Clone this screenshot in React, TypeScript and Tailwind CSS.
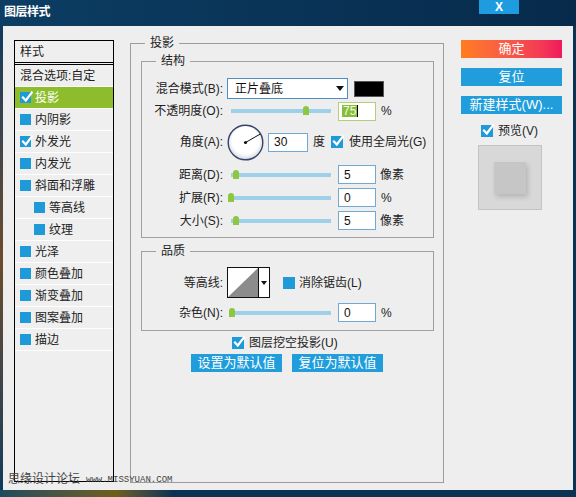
import React from "react";

const Check = ({ checked, cls }: { checked: boolean; cls: string }) => (
  <span className={`relative inline-block shrink-0 bg-[#1e9ad8] ${cls}`}>
    {checked && (
      <svg className="absolute left-[1px] top-[-2px]" width="12" height="13" viewBox="0 0 12 13">
        <path d="M2 7.5 L4.8 10.5 L10.8 2.5" stroke="#fff" strokeWidth="2.2" fill="none" strokeLinecap="square" />
      </svg>
    )}
  </span>
);

const Slider = ({ left }: { left: number }) => (
  <div className="relative w-[100px] h-[10px] flex items-center ml-[8px]">
    <div className="w-full h-[4px] bg-[#9fd0ea]" />
    <div className="absolute top-[0px] w-[6px] h-[9px] bg-[#8dc63f] rounded-t-[3px]" style={{ left }} />
  </div>
);

const Field = ({ v }: { v: string }) => (
  <div className="w-[38px] h-[19px] bg-white border border-[#72a9d3] pl-[5px] flex items-center text-[12px] text-[#111]">
    {v}
  </div>
);

const Label = ({ t }: { t: string }) => (
  <div className="w-[81px] text-right text-[12px] text-[#222] shrink-0">{t}</div>
);

const ListRow = ({
  t,
  checked,
  active,
  indent,
}: {
  t: string;
  checked: boolean;
  active?: boolean;
  indent?: boolean;
}) => (
  <div
    className={`h-[22px] border-b border-white flex items-center text-[12px] ${
      active ? "bg-[#8dbd2c] text-white" : "text-[#222]"
    } ${indent ? "pl-[19px]" : "pl-[5px]"}`}
  >
    <Check checked={checked} cls="w-[11px] h-[11px]" />
    <span className="ml-[4px]">{t}</span>
  </div>
);

export default function App() {
  return (
    <div className="relative w-[576px] h-[497px] overflow-hidden bg-[#0a3457] font-['Liberation_Sans','Noto_Sans_CJK_SC',sans-serif] leading-[14px]">
      {/* title bar */}
      <div className="h-[26px] flex items-start justify-between bg-gradient-to-r from-[#0c3d63] to-[#072a4b]">
        <div className="pl-[4px] pt-[5px] text-[12px] font-bold text-white tracking-[-0.5px]">图层样式</div>
        <div className="mr-[57px] w-[40px] h-[14px] bg-[#1f9be0] text-white text-[12px] font-bold flex items-center justify-center">
          X
        </div>
      </div>

      {/* body row */}
      <div className="flex h-[464px]">
        <div className="w-[3px] bg-gradient-to-b from-[#0c3a5e] via-[#6b4b2a] to-[#0d3a5a]" />
        <div className="w-[570px] h-[464px] bg-[#eeeeee] flex items-start">
          {/* left list */}
          <div className="mt-[14px] ml-[11px] w-[100px] h-[442px] border border-black flex flex-col bg-[#efefef]">
            <div className="h-[21px] pl-[5px] flex items-center text-[12px] text-[#222]">样式</div>
            <div className="h-[3px] border-y border-black" />
            <div className="h-[22px] pl-[5px] flex items-center text-[12px] text-[#222] border-b border-white">
              混合选项:自定
            </div>
            <ListRow t="投影" checked active />
            <ListRow t="内阴影" checked={false} />
            <ListRow t="外发光" checked />
            <ListRow t="内发光" checked={false} />
            <ListRow t="斜面和浮雕" checked={false} />
            <ListRow t="等高线" checked={false} indent />
            <ListRow t="纹理" checked={false} indent />
            <ListRow t="光泽" checked={false} />
            <ListRow t="颜色叠加" checked={false} />
            <ListRow t="渐变叠加" checked={false} />
            <ListRow t="图案叠加" checked={false} />
            <ListRow t="描边" checked={false} />
          </div>

          {/* main group */}
          <fieldset className="mt-[10px] ml-[16px] w-[314px] h-[447px] border border-[#9d9d9d] min-w-0">
            <legend className="ml-[14px] px-[5px] text-[12px] leading-[14px] text-[#222]">投影</legend>

            <fieldset className="mt-[4px] ml-[10px] w-[293px] border border-[#a0a0a0] pt-[10px] pb-[7px] min-w-0">
              <legend className="ml-[14px] px-[5px] text-[12px] leading-[14px] text-[#222]">结构</legend>

              <div className="flex items-center h-[21px]">
                <Label t="混合模式(B):" />
                <div className="ml-[4px] w-[121px] h-[21px] bg-white border border-[#4b8fc4] flex items-center justify-between pl-[7px] pr-[3px] text-[12px] text-[#111]">
                  <span>正片叠底</span>
                  <svg width="8" height="5" viewBox="0 0 8 5">
                    <path d="M0 0 H8 L4 5 Z" fill="#111" />
                  </svg>
                </div>
                <div className="ml-[6px] w-[30px] h-[16px] bg-black border border-[#555]" />
              </div>

              <div className="flex items-center h-[20px] mt-[2px]">
                <Label t="不透明度(O):" />
                <Slider left={72} />
                <div className="ml-[7px] w-[38px] h-[19px] bg-white border border-[#b3cf78] pl-[3px] flex items-center text-[12px]">
                  <span className="bg-[#86bd3a] text-[#f4ffe0] px-[1px] leading-[12px]">75</span>
                  <span className="w-[1px] h-[12px] bg-black" />
                </div>
                <span className="ml-[5px] text-[12px] text-[#222]">%</span>
              </div>

              <div className="flex items-center h-[38px] mt-[2px]">
                <Label t="角度(A):" />
                <svg className="ml-[4px]" width="37" height="37" viewBox="0 0 37 37">
                  <defs>
                    <radialGradient id="dial" cx="50%" cy="45%" r="55%">
                      <stop offset="70%" stopColor="#ffffff" />
                      <stop offset="100%" stopColor="#d4d6dc" />
                    </radialGradient>
                  </defs>
                  <circle cx="18.5" cy="18.5" r="17.3" fill="url(#dial)" stroke="#34446a" strokeWidth="1.4" />
                  <line x1="18.5" y1="18.5" x2="33" y2="10.2" stroke="#111" strokeWidth="1" />
                  <circle cx="18.5" cy="18.5" r="1.6" fill="#111" />
                </svg>
                <div className="ml-[4px] w-[40px] h-[19px] bg-white border border-[#72a9d3] pl-[5px] flex items-center text-[12px] text-[#111]">
                  30
                </div>
                <span className="ml-[5px] text-[12px] text-[#222]">度</span>
                <Check checked cls="ml-[6px] w-[12px] h-[12px]" />
                <span className="ml-[6px] text-[12px] text-[#222]">使用全局光(G)</span>
              </div>

              <div className="flex items-center h-[19px] mt-[4px]">
                <Label t="距离(D):" />
                <Slider left={2} />
                <div className="ml-[7px]">
                  <Field v="5" />
                </div>
                <span className="ml-[4px] text-[12px] text-[#222]">像素</span>
              </div>

              <div className="flex items-center h-[19px] mt-[4px]">
                <Label t="扩展(R):" />
                <Slider left={-3} />
                <div className="ml-[7px]">
                  <Field v="0" />
                </div>
                <span className="ml-[5px] text-[12px] text-[#222]">%</span>
              </div>

              <div className="flex items-center h-[19px] mt-[4px]">
                <Label t="大小(S):" />
                <Slider left={2} />
                <div className="ml-[7px]">
                  <Field v="5" />
                </div>
                <span className="ml-[4px] text-[12px] text-[#222]">像素</span>
              </div>
            </fieldset>

            <fieldset className="mt-[6px] ml-[10px] w-[293px] border border-[#a0a0a0] pt-[9px] pb-[8px] min-w-0">
              <legend className="ml-[14px] px-[5px] text-[12px] leading-[14px] text-[#222]">品质</legend>

              <div className="flex items-center h-[31px]">
                <Label t="等高线:" />
                <div className="ml-[4px] h-[31px] flex border border-[#111] bg-white">
                  <svg width="30" height="29" viewBox="0 0 30 29">
                    <path d="M0 29 L30 0 L30 29 Z" fill="#8c8c8c" />
                  </svg>
                  <div className="w-[11px] h-full border-l border-[#111] flex items-center justify-center">
                    <svg width="6" height="4" viewBox="0 0 6 4">
                      <path d="M0 0 H6 L3 4 Z" fill="#111" />
                    </svg>
                  </div>
                </div>
                <Check checked={false} cls="ml-[13px] w-[12px] h-[12px]" />
                <span className="ml-[4px] text-[12px] text-[#222]">消除锯齿(L)</span>
              </div>

              <div className="flex items-center h-[19px] mt-[5px]">
                <Label t="杂色(N):" />
                <Slider left={-2} />
                <div className="ml-[7px]">
                  <Field v="0" />
                </div>
                <span className="ml-[5px] text-[12px] text-[#222]">%</span>
              </div>
            </fieldset>

            <div className="mt-[5px] ml-[101px] flex items-center h-[13px]">
              <Check checked cls="w-[12px] h-[12px]" />
              <span className="ml-[5px] text-[12px] text-[#222]">图层挖空投影(U)</span>
            </div>

            <div className="mt-[5px] ml-[60px] flex gap-[10px]">
              <div className="w-[91px] h-[18px] bg-[#209dda] text-white text-[13px] flex items-center justify-center">
                设置为默认值
              </div>
              <div className="w-[91px] h-[18px] bg-[#209dda] text-white text-[13px] flex items-center justify-center">
                复位为默认值
              </div>
            </div>
          </fieldset>

          {/* right column */}
          <div className="ml-[17px] mt-[14px] w-[101px] flex flex-col">
            <div className="h-[18px] bg-gradient-to-r from-[#ff7c1c] to-[#f0165c] text-white text-[13px] flex items-center justify-center">
              确定
            </div>
            <div className="mt-[10px] h-[18px] bg-[#209dda] text-white text-[13px] flex items-center justify-center">
              复位
            </div>
            <div className="mt-[10px] h-[18px] bg-[#209dda] text-white text-[13px] flex items-center justify-center">
              新建样式(W)...
            </div>
            <div className="mt-[10px] ml-[20px] flex items-center h-[13px]">
              <Check checked cls="w-[12px] h-[12px]" />
              <span className="ml-[5px] text-[12px] text-[#222]">预览(V)</span>
            </div>
            <div className="mt-[8px] ml-[17px] w-[64px] h-[65px] bg-[#d8d8d8] border border-[#c4c4c4] flex items-center justify-center">
              <div className="w-[32px] h-[32px] bg-[#c6c6c6] shadow-[2px_3px_5px_rgba(0,0,0,0.16)]" />
            </div>
          </div>
        </div>
        <div className="flex-1 bg-[#0a3353]" />
      </div>

      {/* bottom strip */}
      <div className="h-[7px] bg-gradient-to-r from-[#1d4b5c] via-[#6e5e18] via-20% to-[#0b3252] to-30%" />

      {/* watermark */}
      <div className="absolute left-[8px] top-[472px] flex items-end">
        <span className="text-[12px] leading-[14px] text-[#444]">思缘设计论坛</span>
        <span className="ml-[6px] text-[9px] leading-[10px] text-[#444] font-['Liberation_Mono',monospace] mb-[1px]">
          www.MISSYUAN.COM
        </span>
      </div>
    </div>
  );
}
